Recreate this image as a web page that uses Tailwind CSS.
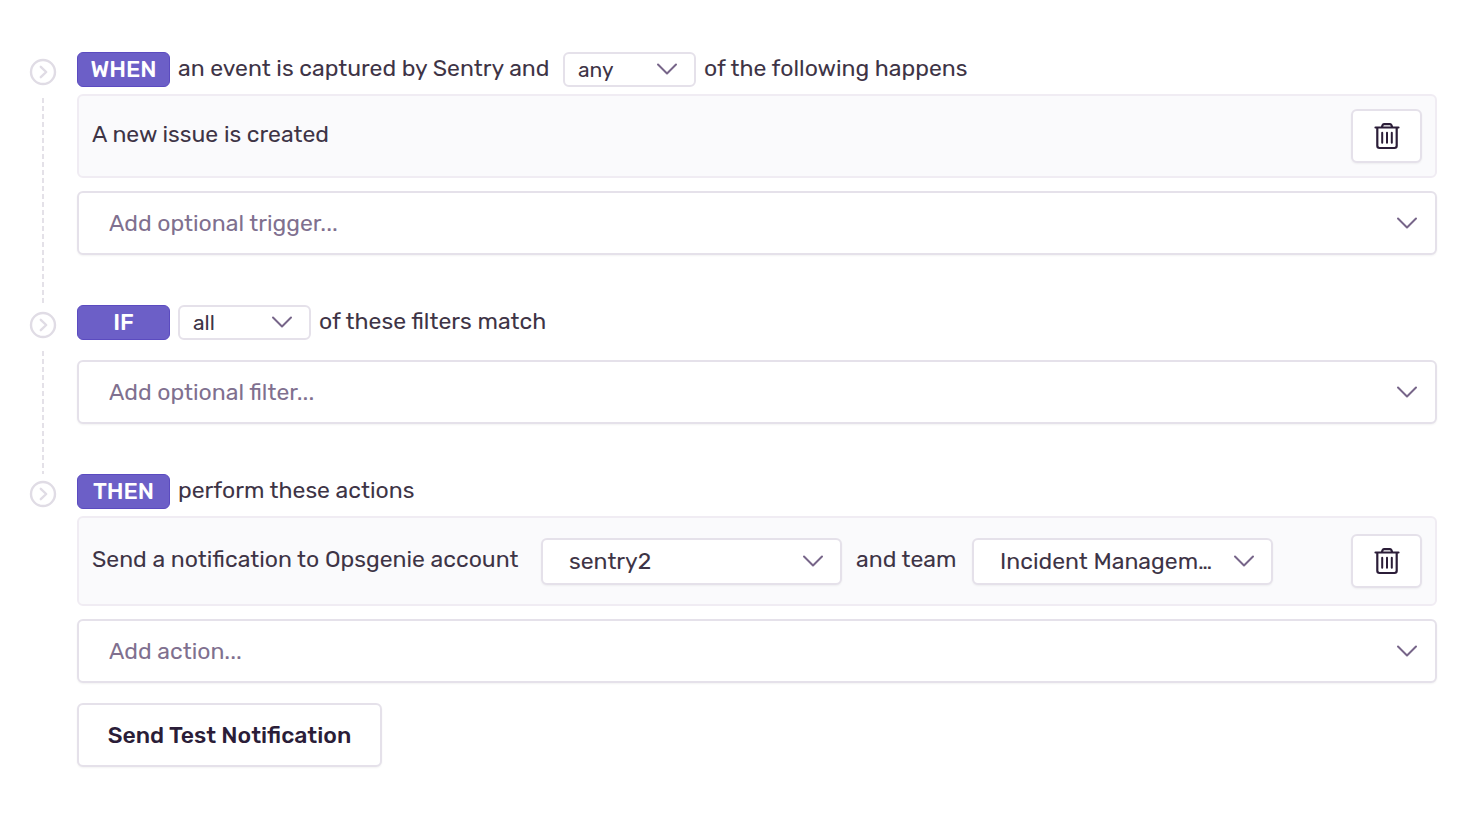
<!DOCTYPE html>
<html lang="en">
<head>
<meta charset="utf-8">
<meta name="viewport" content="width=device-width, initial-scale=1">
<title>Alert rule conditions</title>
<script src="https://cdn.jsdelivr.net/npm/@tailwindcss/browser@4"></script>
</head>
<body class="bg-white font-[Rubik,Roboto,sans-serif] text-[23px] leading-8 text-[#3e3446]">
<svg class="hidden" aria-hidden="true">
  <symbol id="chevron" viewBox="0 0 22 14"><path d="M2 2.500 11 11.500 20 2.500" fill="none" stroke="currentColor" stroke-width="2" stroke-linecap="round" stroke-linejoin="round"/></symbol>
  <symbol id="step" viewBox="0 0 28 28"><circle cx="14" cy="14" r="12" fill="none" stroke="currentColor" stroke-width="2.4"/><path d="M11.800 8.800 17.200 14l-5.400 5.200" fill="none" stroke="currentColor" stroke-width="2.4" stroke-linecap="round" stroke-linejoin="round"/></symbol>
  <symbol id="trash" viewBox="0 0 28 28"><g fill="none" stroke="currentColor" stroke-width="2.200" stroke-linecap="round" stroke-linejoin="round"><path d="M2.500 5.500h23M4.300 5.500v18.300a2.200 2.200 0 0 0 2.200 2.200h15a2.200 2.200 0 0 0 2.200-2.200V5.500M8.800 5.200l.8-2A1.600 1.600 0 0 1 11 2.200h6a1.600 1.600 0 0 1 1.400 1l.8 2"/><path d="M9.200 10.800v10M14 10.800v10M18.800 10.800v10" stroke-width="2"/></g></symbol>
</svg>
<main class="pl-[29px] pr-[47px] pt-[52px] pb-14">

  <section class="flex gap-5">
    <div class="flex w-7 shrink-0 flex-col items-center pt-1.5">
      <svg class="size-7 shrink-0 text-[#e0dce5]"><use href="#step"/></svg>
      <div class="mt-3 w-0.5 flex-1 bg-[repeating-linear-gradient(#e4e1e8_0_5px,transparent_5px_8px)]"></div>
    </div>
    <div class="min-w-0 flex-1 pb-[50px]">
      <div class="flex h-[35px] items-center gap-2">
        <strong class="w-[93px] rounded-md border border-[#5b4bc0] bg-[#6c5fc7] text-center font-medium leading-[33px] text-white">WHEN</strong>
        <span class="min-w-[377px] pb-1">an event is captured by Sentry and</span>
        <div class="relative w-[133px]">
          <select aria-label="Trigger match" class="block h-[35px] w-full appearance-none rounded-md border-2 border-[#e5e1ea] bg-white pl-[13px] pr-11 text-[21px] leading-7"><option>any</option><option>all</option></select>
          <svg class="pointer-events-none absolute right-[18px] top-2.5 h-3.5 w-[22px] text-[#776589]"><use href="#chevron"/></svg>
        </div>
        <span class="pb-1">of the following happens</span>
      </div>
      <div class="mt-[7px] flex h-[84px] items-center justify-between rounded-md border-2 border-[#f0ecf3] bg-[#fafafc] px-[13px]">
        <span class="pb-1">A new issue is created</span>
        <button aria-label="Delete trigger" class="flex h-[54px] w-[71px] items-center justify-center rounded-md border-2 border-[#e5e1ea] bg-white text-[#2b1d38] shadow-xs"><svg class="size-7"><use href="#trash"/></svg></button>
      </div>
      <div class="relative mt-[13px]">
        <select aria-label="Add optional trigger" class="block h-16 w-full appearance-none rounded-md border-2 border-[#e5e1ea] bg-white pl-[30px] pr-16 text-[#80708f] shadow-xs"><option>Add optional trigger...</option></select>
        <svg class="pointer-events-none absolute right-[19px] top-[25px] h-3.5 w-[22px] text-[#776589]"><use href="#chevron"/></svg>
      </div>
    </div>
  </section>

  <section class="flex gap-5">
    <div class="flex w-7 shrink-0 flex-col items-center pt-1.5">
      <svg class="size-7 shrink-0 text-[#e0dce5]"><use href="#step"/></svg>
      <div class="mt-3 w-0.5 flex-1 bg-[repeating-linear-gradient(#e4e1e8_0_5px,transparent_5px_8px)]"></div>
    </div>
    <div class="min-w-0 flex-1 pb-[50px]">
      <div class="flex h-[35px] items-center gap-2">
        <strong class="w-[93px] rounded-md border border-[#5b4bc0] bg-[#6c5fc7] text-center font-medium leading-[33px] text-white">IF</strong>
        <div class="relative w-[133px]">
          <select aria-label="Filter match" class="block h-[35px] w-full appearance-none rounded-md border-2 border-[#e5e1ea] bg-white pl-[13px] pr-11 text-[21px] leading-7"><option>all</option><option>any</option></select>
          <svg class="pointer-events-none absolute right-[18px] top-2.5 h-3.5 w-[22px] text-[#776589]"><use href="#chevron"/></svg>
        </div>
        <span class="pb-1">of these filters match</span>
      </div>
      <div class="relative mt-5">
        <select aria-label="Add optional filter" class="block h-16 w-full appearance-none rounded-md border-2 border-[#e5e1ea] bg-white pl-[30px] pr-16 text-[#80708f] shadow-xs"><option>Add optional filter...</option></select>
        <svg class="pointer-events-none absolute right-[19px] top-[25px] h-3.5 w-[22px] text-[#776589]"><use href="#chevron"/></svg>
      </div>
    </div>
  </section>

  <section class="flex gap-5">
    <div class="flex w-7 shrink-0 flex-col items-center pt-1.5">
      <svg class="size-7 shrink-0 text-[#e0dce5]"><use href="#step"/></svg>
    </div>
    <div class="min-w-0 flex-1">
      <div class="flex h-[35px] items-center gap-2">
        <strong class="w-[93px] rounded-md border border-[#5b4bc0] bg-[#6c5fc7] text-center font-medium leading-[33px] text-white">THEN</strong>
        <span class="pb-1">perform these actions</span>
      </div>
      <div class="mt-[7px] flex h-[90px] items-center rounded-md border-2 border-[#f0ecf3] bg-[#fafafc] px-[13px]">
        <span class="min-w-[435px] pb-1">Send a notification to Opsgenie account</span>
        <div class="relative ml-3.5 w-[301px]">
          <select aria-label="Opsgenie account" class="block h-[47px] w-full appearance-none rounded-md border-2 border-[#e5e1ea] bg-white pl-[26px] pr-[50px] shadow-xs"><option>sentry2</option></select>
          <svg class="pointer-events-none absolute right-[18px] top-4 h-3.5 w-[22px] text-[#776589]"><use href="#chevron"/></svg>
        </div>
        <span class="ml-3.5 min-w-[102px] pb-1">and team</span>
        <div class="relative ml-3.5 w-[301px]">
          <select aria-label="Opsgenie team" class="block h-[47px] w-full appearance-none text-ellipsis rounded-md border-2 border-[#e5e1ea] bg-white pl-[26px] pr-[50px] shadow-xs"><option>Incident Management Team</option></select>
          <svg class="pointer-events-none absolute right-[18px] top-4 h-3.5 w-[22px] text-[#776589]"><use href="#chevron"/></svg>
        </div>
        <button aria-label="Delete action" class="ml-auto flex h-[54px] w-[71px] items-center justify-center rounded-md border-2 border-[#e5e1ea] bg-white text-[#2b1d38] shadow-xs"><svg class="size-7"><use href="#trash"/></svg></button>
      </div>
      <div class="relative mt-[13px]">
        <select aria-label="Add action" class="block h-16 w-full appearance-none rounded-md border-2 border-[#e5e1ea] bg-white pl-[30px] pr-16 text-[#80708f] shadow-xs"><option>Add action...</option></select>
        <svg class="pointer-events-none absolute right-[19px] top-[25px] h-3.5 w-[22px] text-[#776589]"><use href="#chevron"/></svg>
      </div>
      <button class="mt-5 h-16 min-w-[305px] rounded-md border-2 border-[#e5e1ea] bg-white px-[26px] font-medium text-[#2b1d38] shadow-xs">Send Test Notification</button>
    </div>
  </section>
</main>
</body>
</html>
